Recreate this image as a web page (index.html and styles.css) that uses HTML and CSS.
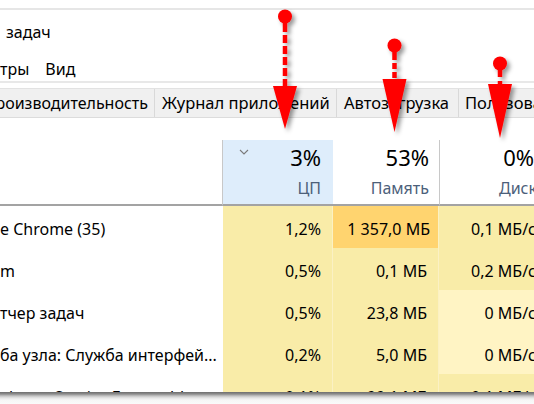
FILE: index.html
```html
<!DOCTYPE html>
<html lang="ru">
<head>
<meta charset="utf-8">
<title>Диспетчер задач</title>
<link rel="stylesheet" href="styles.css">
</head>
<body>
<div class="shot">
  <div class="window">
    <div class="topline"></div>
    <div class="title">задач</div>
    <div class="menu"><span class="m1">тры</span><span class="m2">Вид</span></div>
    <div class="sep"></div>
    <div class="tabs">
      <div class="tab t1"><span>роизводительность</span></div>
      <div class="tab t2">Журнал приложений</div>
      <div class="tab t3">Автозагрузка</div>
      <div class="tab t4">Пользователи</div>
    </div>
    <div class="table">
      <div class="hcell hname"></div>
      <div class="hcell hnum sorted">
        <svg class="chev" width="10" height="6" viewBox="0 0 10 6"><path d="M1 1 L5 5 L9 1" fill="none" stroke="#7a7a7a" stroke-width="1.1"/></svg>
        <div class="pct">3%</div><div class="lbl">ЦП</div>
      </div>
      <div class="hcell hnum"><div class="pct">53%</div><div class="lbl">Память</div></div>
      <div class="hcell hnum hdisk"><div class="pct">0%</div><div class="lbl">Диск</div></div>

      <div class="cell name">e Chrome (35)</div>
      <div class="cell num">1,2%</div>
      <div class="cell num hot">1 357,0 МБ</div>
      <div class="cell num disk">0,1 МБ/с</div>

      <div class="cell name">m</div>
      <div class="cell num">0,5%</div>
      <div class="cell num">0,1 МБ</div>
      <div class="cell num disk">0,2 МБ/с</div>

      <div class="cell name">тчер задач</div>
      <div class="cell num">0,5%</div>
      <div class="cell num">23,8 МБ</div>
      <div class="cell num disk pale">0 МБ/с</div>

      <div class="cell name">ба узла: Служба интерфей...</div>
      <div class="cell num">0,2%</div>
      <div class="cell num">5,0 МБ</div>
      <div class="cell num disk pale">0 МБ/с</div>

      <div class="cell name last">alware Service Executable</div>
      <div class="cell num">0,1%</div>
      <div class="cell num">99,1 МБ</div>
      <div class="cell num disk">0,1 МБ/с</div>
    </div>
  </div>
  <div class="tear"></div>
  <svg class="annot" width="534" height="404" viewBox="0 0 534 404">
    <defs>
      <filter id="sh" x="-60%" y="-30%" width="220%" height="160%">
        <feDropShadow dx="3" dy="3" stdDeviation="2.2" flood-color="#000" flood-opacity="0.4"/>
      </filter>
    </defs>
    <g fill="#ff0000" stroke="none" filter="url(#sh)">
      <circle cx="285" cy="16.5" r="7"/>
      <line x1="285" y1="20" x2="285" y2="90" stroke="#ff0000" stroke-width="4.5" stroke-dasharray="12 3 8 3 8 3 8 3 8 3 8 3 8 3"/>
      <polygon points="273,86 297,86 285,129"/>

      <circle cx="394.5" cy="45.5" r="7"/>
      <line x1="394.5" y1="50" x2="394.5" y2="82" stroke="#ff0000" stroke-width="4.5" stroke-dasharray="10 3 6 3 6 3"/>
      <polygon points="382.5,79 406.5,79 394.5,132"/>

      <circle cx="500" cy="63.5" r="7"/>
      <line x1="500" y1="68" x2="500" y2="86" stroke="#ff0000" stroke-width="4.5" stroke-dasharray="9 4 6"/>
      <polygon points="488,84 512,84 500,138"/>
    </g>
  </svg>
</div>
</body>
</html>
```

FILE: styles.css
```css
* { box-sizing: border-box; }

html, body {
  margin: 0;
  padding: 0;
  background: #ffffff;
}

body {
  font-family: "Segoe UI", "Noto Sans", "Open Sans", sans-serif;
  color: #000;
  font-size: 16px;
}

.shot {
  position: relative;
  width: 534px;
  height: 404px;
  overflow: hidden;
  background: #f7f7f7;
}

.window {
  width: 534px;
  height: 392px;
  overflow: hidden;
  background: #fff;
}

.topline {
  margin-top: 8px;
  height: 2px;
  background: #e6e6e6;
}

.title {
  padding-top: 10px;
  padding-left: 6px;
  line-height: 24px;
  height: 34px;
  white-space: nowrap;
}

.menu {
  display: flex;
  gap: 16px;
  line-height: 24px;
  height: 37px;
  padding-top: 13px;
  white-space: nowrap;
}

.sep {
  height: 2px;
  background: #e8e8e8;
}

.tabs {
  margin-top: 5px;
  height: 30px;
  display: flex;
  background: #f0f0f0;
  border-top: 1px solid #e2e2e2;
  border-bottom: 1px solid #dcdcdc;
  white-space: nowrap;
  font-size: 16.5px;
}

.tab {
  flex: none;
  line-height: 28px;
  padding: 0 6px;
  border-right: 1px solid #d9d9d9;
  overflow: hidden;
}

.tab.t1 {
  width: 155px;
  display: flex;
  justify-content: flex-end;
  padding-right: 6px;
  font-size: 16px;
}
.tab.t2 { width: 182px; padding-left: 7px; }
.tab.t3 { width: 122px; padding-left: 7px; }
.tab.t4 { width: 120px; padding-left: 6px; border-right: none; }

.table {
  margin-top: 22px;
  display: grid;
  grid-template-columns: 223px 110px 106px 112px;
  grid-auto-rows: 42px;
  grid-template-rows: 66px;
  width: 551px;
}

.hcell {
  height: 66px;
  border-bottom: 2px solid #a3a3a3;
  position: relative;
}

.hname {
  border-right: 1px solid #c8c8c8;
}

.hnum {
  text-align: right;
  padding-right: 10px;
}

.hnum.sorted {
  background: #deedfb;
  padding-right: 12px;
}

.hdisk {
  border-left: 1px solid #c8c8c8;
  padding-right: 14px;
}

.chev {
  position: absolute;
  left: 16px;
  top: 9px;
}

.pct {
  font-size: 22px;
  line-height: 26px;
  padding-top: 4px;
}

.hdisk .pct {
  padding-right: 3px;
}

.lbl {
  color: #4c607a;
  font-size: 16px;
  line-height: 20px;
  padding-top: 8px;
}

.cell {
  height: 42px;
  line-height: 42px;
  padding-top: 2px;
  white-space: nowrap;
  overflow: hidden;
}

.cell.name {
  padding-left: 0;
}

.cell.num {
  background: #f9eca8;
  text-align: right;
  padding-right: 11px;
  border-right: 1px solid #fbf1c4;
}

.cell.num.hot {
  background: #ffd46f;
  padding-right: 8px;
}

.cell.num.disk {
  padding-right: 14px;
}

.cell.num.pale {
  background: #fff4c4;
}

.annot {
  position: absolute;
  left: 0;
  top: 0;
  pointer-events: none;
}

.tear {
  height: 12px;
  background: linear-gradient(#6e6e6e 0px, #8c8c8c 2px, #c4c4c4 4px, #e6e6e6 6px, #f6f6f6 8px, #fafafa 12px);
}
```
